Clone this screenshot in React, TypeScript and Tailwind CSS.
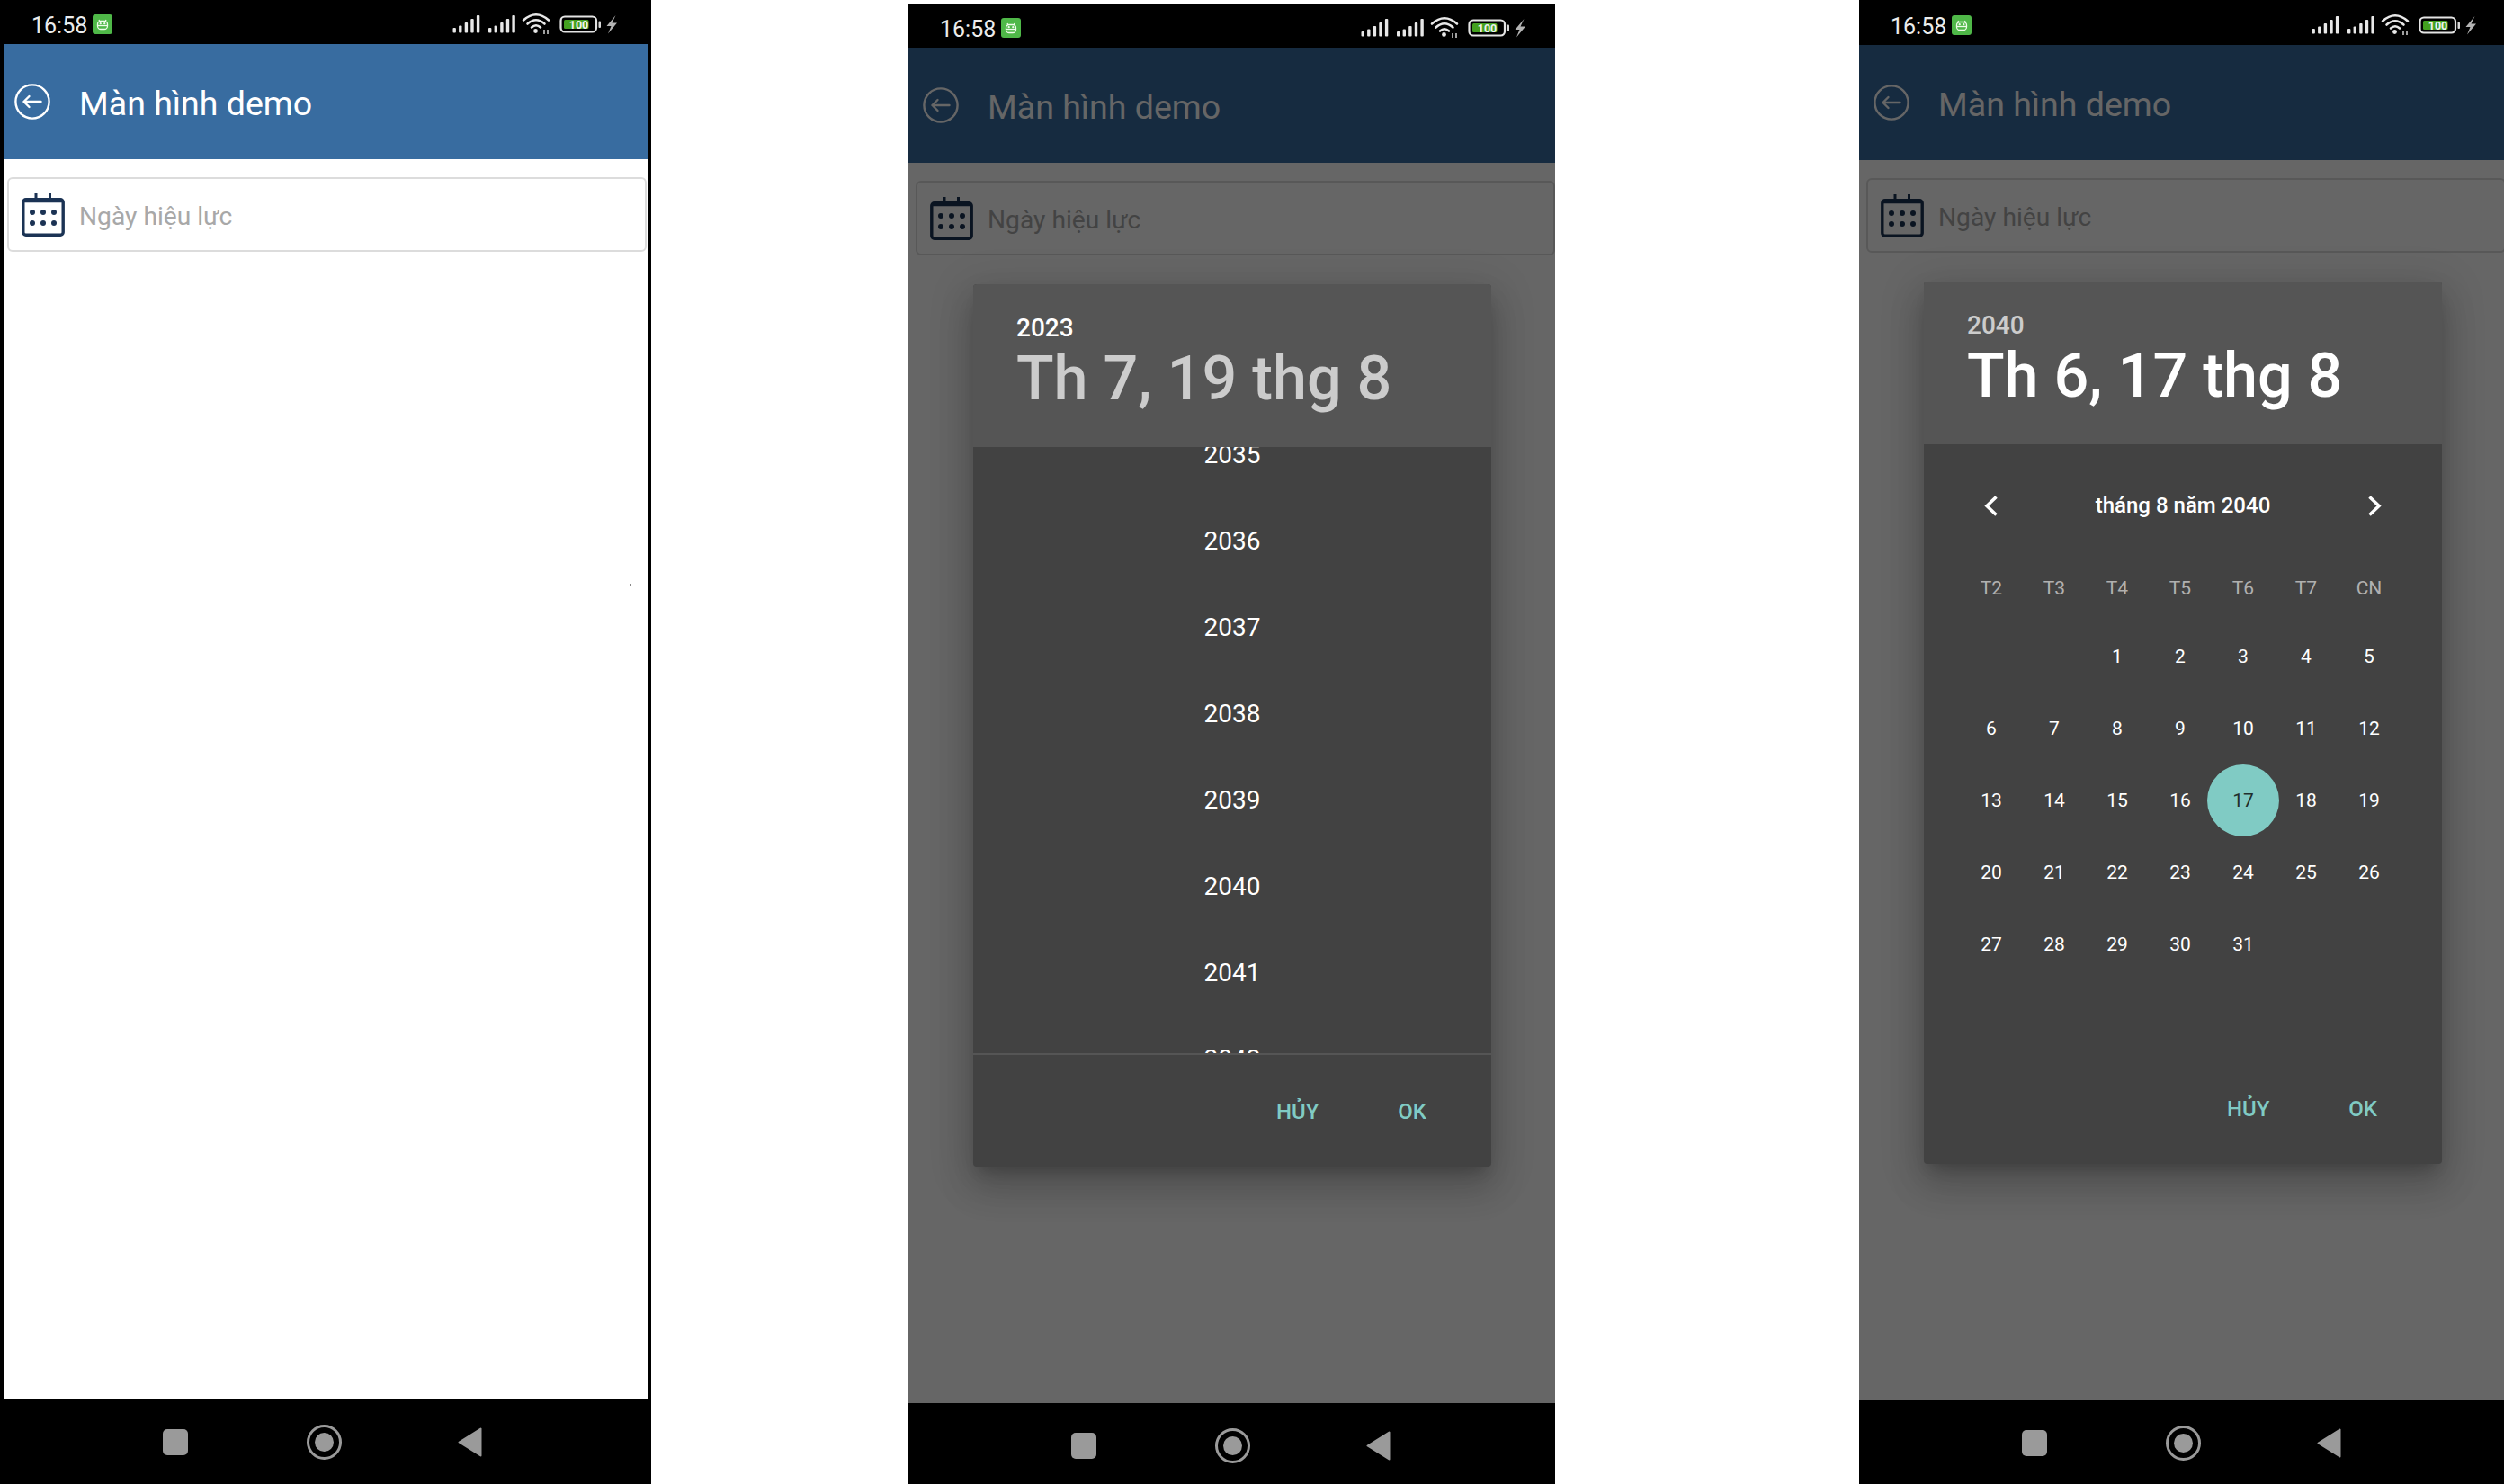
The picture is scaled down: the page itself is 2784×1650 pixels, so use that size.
import React from "react";

function StatusIcons() {
  const bars = (x0: number) =>
    [0, 1, 2, 3, 4].map((i) => {
      const tops = [23, 20.5, 17, 13, 9];
      return <rect key={i} x={x0 + i * 6.6} y={tops[i]} width="3.4" height={28.5 - tops[i]} rx="1" fill="#e8e8e8" />;
    });
  return (
    <svg width="210" height="40" viewBox="0 0 210 40" className="ml-[365px] mt-[8px] shrink-0">
      {bars(13.5)}
      {bars(53)}
      <g fill="none" stroke="#e8e8e8" strokeWidth="2.6" strokeLinecap="round">
        <path d="M92 14.5 Q106 2 120 14.5" />
        <path d="M96.5 18.5 Q106 10 115.5 18.5" />
        <path d="M101 22.5 Q106 18 111 22.5" />
      </g>
      <circle cx="105.5" cy="26.5" r="2.4" fill="#e8e8e8" />
      <path d="M115 25v5M119 25v5" stroke="#c8c8c8" strokeWidth="1.6" />
      <rect x="133.5" y="10.5" width="39.5" height="17" rx="4.5" fill="none" stroke="#e4e4e4" strokeWidth="2.2" />
      <rect x="137" y="14" width="27.5" height="10" rx="1.5" fill="#43a01f" />
      <text x="153.5" y="23.5" textAnchor="middle" fontFamily="Roboto, sans-serif" fontWeight="700" fontSize="12.5" fill="#f0f0f0">100</text>
      <rect x="175.5" y="15.5" width="2.5" height="7.5" rx="1" fill="#d8d8d8" />
      <path d="M194.5 9 L184.5 21 H189.5 L186 29.5 L196 17.5 H190.5 Z" fill="#b4b4b4" />
    </svg>
  );
}

function Robot() {
  return (
    <div className="mt-[16px] flex h-[22px] w-[22px] shrink-0 items-center justify-center rounded-[3px] bg-[#4fb848]">
      <svg width="16" height="16" viewBox="0 0 16 16" fill="none" stroke="#eefbe9" strokeWidth="1.3">
        <path d="M4 3 L5 5 M12 3 L11 5" />
        <rect x="2.5" y="4.5" width="11" height="9" rx="3.5" />
        <path d="M2.5 9.5 H13.5" />
        <circle cx="5.7" cy="7.2" r="0.5" fill="#eefbe9" />
        <circle cx="10.3" cy="7.2" r="0.5" fill="#eefbe9" />
      </svg>
    </div>
  );
}

function BackIcon() {
  return (
    <svg width="40" height="40" viewBox="0 0 40 40" fill="none" stroke="#fff" strokeWidth="2.4" strokeLinecap="round" strokeLinejoin="round" className="shrink-0">
      <circle cx="20" cy="20" r="18.6" />
      <path d="M29.5 20 H10.5 M16.5 14 L10.5 20 L16.5 26" />
    </svg>
  );
}

function CalendarIcon() {
  return (
    <svg width="48" height="48" viewBox="0 0 48 48" fill="none" className="shrink-0">
      <rect x="1.8" y="6.8" width="44.4" height="39.4" rx="3" stroke="#1b3354" strokeWidth="3.4" />
      <path d="M1.8 8.5 H46.2" stroke="#1b3354" strokeWidth="3.4" />
      <path d="M16 0 V10 M31.5 0 V10" stroke="#1b3354" strokeWidth="3" />
      {[12, 24, 36].map((x) =>
        [21, 33].map((y) => <circle key={`${x}-${y}`} cx={x} cy={y} r="3" fill="#1b3354" />)
      )}
    </svg>
  );
}

function NavBar() {
  return (
    <div className="flex h-[94px] items-center bg-black">
      <div className="ml-[181px] h-[29px] w-[28px] rounded-[5px] bg-[#9a9a9a]" />
      <svg width="39" height="39" viewBox="0 0 39 39" className="ml-[132px] shrink-0">
        <circle cx="19.5" cy="19.5" r="18" fill="none" stroke="#9a9a9a" strokeWidth="3" />
        <circle cx="19.5" cy="19.5" r="10.5" fill="#9a9a9a" />
      </svg>
      <svg width="27" height="33" viewBox="0 0 27 33" className="ml-[129px] shrink-0">
        <path d="M25.5 1.5 V31.5 L1.5 16.5 Z" fill="#9a9a9a" stroke="#9a9a9a" strokeWidth="2" strokeLinejoin="round" />
      </svg>
    </div>
  );
}

function Actions() {
  return (
    <div className="flex h-[124px] items-center justify-end gap-[88px] pr-[72px] pt-[2px] text-[24px] font-medium text-[#80cbc4]">
      <span>HỦY</span>
      <span>OK</span>
    </div>
  );
}

function Header({ year, date, yearOn }: { year: string; date: string; yearOn: boolean }) {
  return (
    <div className="h-[181px] bg-[#555555] pl-[48px] pt-[33px]">
      <div className={yearOn ? "h-[32px] text-[28px] font-medium leading-[32px] text-white" : "h-[32px] text-[28px] font-medium leading-[32px] text-[#cccccc]"}>{year}</div>
      <div className={yearOn ? "mt-[1px] h-[78px] text-[68.3px] font-medium leading-[78px] text-[#cccccc]" : "mt-[1px] h-[78px] text-[68.3px] font-medium leading-[78px] text-white"}>{date}</div>
    </div>
  );
}

function YearPanel() {
  const years = [2035, 2036, 2037, 2038, 2039, 2040, 2041, 2042];
  return (
    <>
      <div className="h-[674px] overflow-hidden">
        <div className="-mt-[39px]">
          {years.map((y) => (
            <div key={y} className="flex h-[96px] items-center justify-center text-[28px] text-white">{y}</div>
          ))}
        </div>
      </div>
      <div className="h-[2px] bg-[#555555]" />
    </>
  );
}

function Chevron({ left }: { left: boolean }) {
  return (
    <svg width="15" height="23" viewBox="0 0 15 23" fill="none" stroke="#fff" strokeWidth="3.6" className="shrink-0">
      <path d={left ? "M13.5 1.5 L3 11.5 L13.5 21.5" : "M1.5 1.5 L12 11.5 L1.5 21.5"} />
    </svg>
  );
}

function CalendarPanel() {
  const week = ["T2", "T3", "T4", "T5", "T6", "T7", "CN"];
  const days: (number | null)[] = [null, null];
  for (let d = 1; d <= 31; d++) days.push(d);
  return (
    <div className="h-[676px]">
      <div className="ml-[67px] flex h-[136px] w-[442px] items-center justify-between">
        <Chevron left />
        <span className="text-[24px] font-medium text-white">tháng 8 năm 2040</span>
        <Chevron left={false} />
      </div>
      <div className="ml-[40px] grid h-[46px] w-[490px] grid-cols-7 items-center pt-[3px] text-center text-[21px] text-[#b0b0b0]">
        {week.map((w) => (
          <span key={w}>{w}</span>
        ))}
      </div>
      <div className="ml-[40px] mt-[14px] grid w-[490px] grid-cols-7 text-[21px] text-white">
        {days.map((d, i) => (
          <div key={i} className="flex h-[80px] items-center justify-center">
            {d === 17 ? (
              <span className="flex h-[80px] w-[80px] shrink-0 items-center justify-center rounded-full bg-[#80cbc4] pt-[2px] text-[#1f2e2c]">{d}</span>
            ) : (
              <span className="pt-[2px]">{d}</span>
            )}
          </div>
        ))}
      </div>
    </div>
  );
}

function Phone({ outer, children, rails }: { outer: string; children?: React.ReactNode; rails?: boolean }) {
  return (
    <div className={outer}>
      <div className="flex h-[49px] items-start bg-black">
        <span className="ml-[35px] mt-[14px] w-[68px] shrink-0 text-[25px] leading-[30px] text-[#ececec]">16:58</span>
        <Robot />
        <StatusIcons />
      </div>
      <div className="relative h-[1507px] bg-white">
        <div className="flex h-[128px] items-center bg-[#386ca0] pl-[16px]">
          <BackIcon />
          <span className="ml-[32px] mt-[4px] text-[37.5px] text-white">Màn hình demo</span>
        </div>
        <div className="ml-[8px] mt-[20px] flex h-[83px] w-[711px] items-center rounded-[6px] border-2 border-[#dcdcdc] pl-[14px]">
          <CalendarIcon />
          <span className="ml-[16px] mt-[6px] text-[28.2px] text-[#a8a8a8]">Ngày hiệu lực</span>
        </div>
        {children}
      </div>
      <NavBar />
      {rails && (
        <>
          <div className="absolute left-0 top-0 h-full w-[4px] bg-black" />
          <div className="absolute right-0 top-0 h-full w-[4px] bg-black" />
          <div className="absolute left-[700px] top-[649px] h-[2px] w-[2px] bg-[#888888]" />
        </>
      )}
    </div>
  );
}

function Dialog({ children, year, date, yearOn }: { children: React.ReactNode; year: string; date: string; yearOn: boolean }) {
  return (
    <div className="absolute inset-0 bg-black/60 pl-[72px] pt-[263px]">
      <div className="h-[981px] w-[576px] overflow-hidden rounded-[4px] bg-[#424242] shadow-[0_11px_15px_-7px_rgba(0,0,0,0.2),0_24px_38px_3px_rgba(0,0,0,0.14),0_9px_46px_8px_rgba(0,0,0,0.12)]">
        <Header year={year} date={date} yearOn={yearOn} />
        {children}
        <Actions />
      </div>
    </div>
  );
}

export default function App() {
  return (
    <div className="flex h-[1650px] w-[2784px] overflow-hidden bg-white font-[Roboto,sans-serif]">
      <Phone outer="relative h-[1650px] w-[724px] shrink-0 overflow-hidden" rails />
      <Phone outer="relative ml-[286px] mt-[4px] h-[1646px] w-[719px] shrink-0 overflow-hidden">
        <Dialog year="2023" date="Th 7, 19 thg 8" yearOn>
          <YearPanel />
        </Dialog>
      </Phone>
      <Phone outer="relative ml-[338px] h-[1650px] w-[717px] shrink-0 overflow-hidden bg-black pt-[1px]">
        <Dialog year="2040" date="Th 6, 17 thg 8" yearOn={false}>
          <CalendarPanel />
        </Dialog>
      </Phone>
    </div>
  );
}
